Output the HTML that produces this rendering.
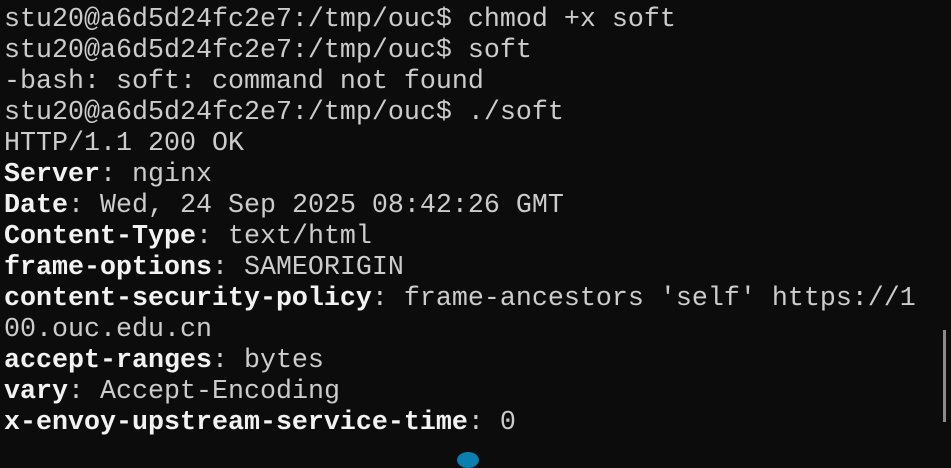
<!DOCTYPE html>
<html><head><meta charset="utf-8"><style>
html,body{margin:0;padding:0;background:#0c0c0c;width:951px;height:462px;overflow:hidden}
pre{margin:0;position:absolute;left:4px;top:5px;font-family:"Liberation Mono",monospace;font-size:26.67px;line-height:31px;color:#cccccc;white-space:pre}
b{color:#f2f2f2;font-weight:bold}
.sb{position:absolute;left:943px;top:330px;width:3px;height:92px;background:#8a8a8a}
.dot{position:absolute;left:457px;top:452px;width:22px;height:16px;border-radius:50%;background:#0a7fb0}
</style></head><body>
<pre>stu20@a6d5d24fc2e7:/tmp/ouc$ chmod +x soft
stu20@a6d5d24fc2e7:/tmp/ouc$ soft
-bash: soft: command not found
stu20@a6d5d24fc2e7:/tmp/ouc$ ./soft
HTTP/1.1 200 OK
<b>Server</b>: nginx
<b>Date</b>: Wed, 24 Sep 2025 08:42:26 GMT
<b>Content-Type</b>: text/html
<b>frame-options</b>: SAMEORIGIN
<b>content-security-policy</b>: frame-ancestors 'self' https://1
00.ouc.edu.cn
<b>accept-ranges</b>: bytes
<b>vary</b>: Accept-Encoding
<b>x-envoy-upstream-service-time</b>: 0</pre>
<div class="sb"></div>
<div class="dot"></div>
</body></html>
